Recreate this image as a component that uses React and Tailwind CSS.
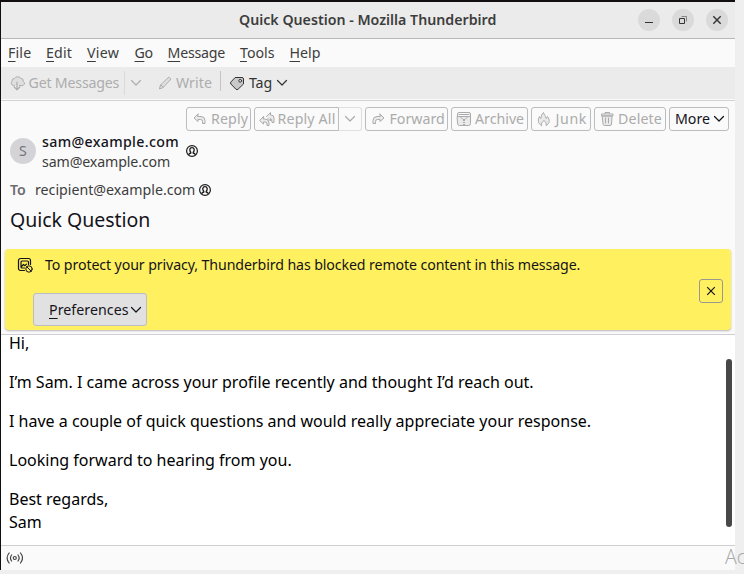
import React from "react";

function Icon({ size = 16, className = "", children }) {
  return (
    <svg width={size} height={size} viewBox="0 0 16 16" fill="none" stroke="currentColor" strokeWidth="1" strokeLinecap="round" strokeLinejoin="round" className={`shrink-0 ${className}`}>
      {children}
    </svg>
  );
}

function Chevron({ className = "" }) {
  return (
    <svg width="12" height="8" viewBox="0 0 12 8" fill="none" stroke="currentColor" strokeWidth="1.2" strokeLinecap="round" strokeLinejoin="round" className={`shrink-0 ${className}`}>
      <path d="M1.5 1.5 6 6l4.5-4.5" />
    </svg>
  );
}

const CloudDown = () => (
  <Icon>
    <path fill="currentColor" fillOpacity=".2" d="M5.500 10.500H4.500A2.500 2.500 0 0 1 3 6.200 2.300 2.300 0 0 1 5.300 3.600 4 4 0 0 1 11.800 3.300 2.800 2.800 0 0 1 14.300 6.500 2.200 2.200 0 0 1 12.500 10.500H10.500" />
    <path strokeWidth="1.200" d="M8 7v7.500M5 11.800l3 2.900 3-2.900" />
  </Icon>
);
const Pencil = () => (
  <Icon>
    <path fill="currentColor" fillOpacity=".2" d="M2.500 13.500l1-3.500L11 2.800a1.200 1.200 0 0 1 1.700 0l.500.500a1.200 1.200 0 0 1 0 1.700L6 12.500z" />
    <path d="M3.800 9.800l2.400 2.400" />
  </Icon>
);
const TagIcon = () => (
  <Icon>
    <path fill="currentColor" fillOpacity=".18" d="M6.500 2.500H13a1.500 1.500 0 0 1 1.500 1.500v5L9.300 14a1.800 1.800 0 0 1-2.600 0L1.900 9a1.500 1.500 0 0 1 0-2z" />
    <circle cx="11.200" cy="5.800" r="1.400" fill="#ebebeb" />
  </Icon>
);
const replyPath = "M6 3 2 7l4 3.500V8.500h2.500q2 0 2 2v2h2.500V9.500q0-4-4-4H6z";
const ReplyIcon = () => (
  <Icon><path fill="currentColor" fillOpacity=".2" d={replyPath} /></Icon>
);
const ForwardIcon = () => (
  <Icon><path fill="currentColor" fillOpacity=".2" d={replyPath} transform="translate(16 0) scale(-1 1)" /></Icon>
);
const ReplyAllIcon = () => (
  <Icon>
    <path fill="currentColor" fillOpacity=".2" d="M4.500 5.500 .600 9.500l3.900 3.500v-2H6q2 0 2 2v1.500h2V12q0-4-4-4H4.500z" />
    <path fill="currentColor" fillOpacity=".2" d="M7.500 5.500 11.500 1.500V4h.500q3 0 3 3v4.500h-2q0-3.500-1.500-4v2.500L9 7.500" />
  </Icon>
);
const ArchiveIcon = () => (
  <Icon>
    <path fill="currentColor" fillOpacity=".2" d="M1.500 5.500h13v7a2 2 0 0 1-2 2h-9a2 2 0 0 1-2-2z" />
    <path d="M1.500 5.500V3a1.500 1.500 0 0 1 1.500-1.500h10A1.500 1.500 0 0 1 14.500 3v2.500M3 3.500h10M4 5.500l3 3h2l3-3" />
    <path d="M8 9v5" strokeDasharray="1 1" strokeLinecap="butt" strokeWidth="2" />
  </Icon>
);
const JunkIcon = () => (
  <Icon>
    <path fill="currentColor" fillOpacity=".2" d="M5.500 14.500C1.500 12.500 1.800 8.500 3.500 5.500c.500 1 .800 1.500 1.500 2C5.300 5 5.500 3 7.500 1.500c0 2 2.500 3 2.500 6 .800-.500 1-1 1.500-2 2.500 3.500 2.500 7-1.500 9 .500-2 0-3.500-2-5-2 1.500-3 3-2.500 5z" />
  </Icon>
);
const TrashIcon = () => (
  <Icon>
    <path fill="currentColor" fillOpacity=".2" d="M3.500 5h9.500l-.500 8a1.500 1.500 0 0 1-1.500 1.500H5.500A1.500 1.500 0 0 1 4 13z" />
    <path d="M2.500 4.500v-1.500h11.500v1.500zM6 2.500v-1h4.500v1M6.500 7v5M9.500 7v5" />
  </Icon>
);
const PersonIcon = () => (
  <svg width="12" height="12" viewBox="0 0 12 12" fill="none" stroke="#1a1a1a" className="shrink-0">
    <circle cx="6" cy="6" r="5.400" strokeWidth="1.200" />
    <path strokeWidth="1.300" d="M2.600 9.800Q3 8.300 4.800 8V7.200Q3.600 6.200 3.800 4.500 4.200 2.700 6 2.700t2.200 1.800Q8.400 6.200 7.200 7.200V8Q9 8.300 9.400 9.800" />
  </svg>
);
const BlockedIcon = () => (
  <Icon>
    <path strokeWidth="1.200" d="M7.500 13.500H3.500a2 2 0 0 1-2-2v-8a2 2 0 0 1 2-2h8a2 2 0 0 1 2 2v4" />
    <path strokeWidth="1.200" d="M7.500 11H5a1 1 0 0 1-1-1V5a1 1 0 0 1 1-1h5.500a1 1 0 0 1 1 1v2.500M4.500 9.500l2-2 1.500 1.200 1.500-1.500" />
    <circle cx="12" cy="12" r="3.200" />
    <path d="M9.800 9.800l4.400 4.400" />
  </Icon>
);
const SignalIcon = () => (
  <svg width="17" height="14" viewBox="0 0 17 14" fill="none" stroke="#444" strokeWidth="1.200" strokeLinecap="round" className="shrink-0">
    <circle cx="8.800" cy="7" r="1.500" />
    <path d="M5.600 4q-2.300 3 0 6M12 4q2.300 3 0 6M3.100 2q-4 5 0 10M14.500 2q4 5 0 10" />
  </svg>
);

const menus = [
  ["F", "ile", "w-[38px] tracking-[0.15px]"],
  ["E", "dit", "w-[41px] tracking-[0.15px]"],
  ["V", "iew", "w-[47.5px] tracking-[0.31px]"],
  ["G", "o", "w-[33px] tracking-[-0.46px]"],
  ["M", "essage", "w-[72.5px] tracking-[-0.24px]"],
  ["T", "ools", "w-[49.5px]"],
  ["H", "elp", "w-[31px]"],
];

function HotLabel({ hot, rest }) {
  return (
    <>
      <span className="underline decoration-1 underline-offset-[3px]">{hot}</span>
      {rest}
    </>
  );
}

function HeaderButton({ icon, children, className = "" }) {
  return (
    <div className={`flex h-6 shrink-0 items-center rounded-[3px] border border-[#bcbcbe] text-[#ababab] ${className}`}>
      {icon}
      {children}
    </div>
  );
}

function WindowButton({ children }) {
  return <div className="flex size-[22px] items-center justify-center rounded-full bg-[#dadada] text-[#333]">{children}</div>;
}

export default function App() {
  return (
    <div className="relative h-[574px] w-[744px] overflow-hidden bg-[#efefef] font-['Noto_Sans',sans-serif] text-[14.2px] leading-5 whitespace-nowrap text-[#3d3d3d]">
      <div className="flex h-[570px] w-[735px] flex-col border-t-2 border-l border-[#120f10] bg-[#fafafa]">
        <header className="flex h-[37px] shrink-0 items-center border-b border-[#b8b8b8] bg-[#ebebeb] pr-[7px]">
          <div className="ml-[238px] flex-1 font-semibold">Quick Question - Mozilla Thunderbird</div>
          <div className="flex gap-3">
            <WindowButton>
              <svg width="10" height="10" stroke="currentColor"><path d="M1 7.500h8" /></svg>
            </WindowButton>
            <WindowButton>
              <svg width="10" height="10" fill="none" stroke="currentColor"><path d="M1.500 3.500h5v5h-5z" /><path d="M3.500 1.500h5v5" strokeOpacity=".5" /></svg>
            </WindowButton>
            <WindowButton>
              <svg width="10" height="10" stroke="currentColor" strokeWidth="1.400"><path d="M1.300 1.300l7.400 7.400M8.700 1.300 1.300 8.700" /></svg>
            </WindowButton>
          </div>
        </header>

        <nav className="flex h-7 shrink-0 items-center pl-[7px]">
          {menus.map(([hot, rest, cls]) => (
            <div key={hot} className={cls}><HotLabel hot={hot} rest={rest} /></div>
          ))}
        </nav>

        <div className="flex h-8 shrink-0 items-center bg-[#ebebeb] pl-2 text-[#adadad]">
          <CloudDown />
          <span className="ml-[3.5px] w-[95.5px] tracking-[-0.2px]">Get Messages</span>
          <div className="h-6 w-px bg-[#dadada]" />
          <Chevron className="ml-[5px]" />
          <span className="ml-[15px]"><Pencil /></span>
          <span className="ml-[3px] w-[44px] tracking-[0.06px]">Write</span>
          <div className="mb-1 h-5 w-px bg-[#c4c4c4]" />
          <div className="ml-2 flex items-center text-[#333]">
            <TagIcon />
            <span className="ml-[4px] w-[27px] tracking-[-0.14px]">Tag</span>
            <Chevron />
          </div>
        </div>

        <section className="mt-px h-[146px] shrink-0 border-t border-[#d2d2d6]">
          <div className="mt-1.5 mr-1.5 flex justify-end gap-[3px]">
            <HeaderButton icon={<ReplyIcon />} className="w-[65px] pl-[5px]"><span className="ml-[3px] tracking-[0.11px]">Reply</span></HeaderButton>
            <div className="flex w-[108px]">
              <HeaderButton icon={<ReplyAllIcon />} className="w-[85px] rounded-r-none pl-[3.500px]"><span className="ml-[3px] tracking-[0.16px]">Reply All</span></HeaderButton>
              <div className="flex h-6 w-[23px] items-center justify-center rounded-r-[3px] border border-l-0 border-[#dfdfdf] text-[#ababab]"><Chevron /></div>
            </div>
            <HeaderButton icon={<ForwardIcon />} className="w-[83px] pl-1"><span className="ml-[3.500px]">Forward</span></HeaderButton>
            <HeaderButton icon={<ArchiveIcon />} className="w-[77px] pl-1"><span className="ml-[3px]">Archive</span></HeaderButton>
            <HeaderButton icon={<JunkIcon />} className="w-[60px] pl-1"><span className="ml-[3.500px] tracking-[0.62px]">Junk</span></HeaderButton>
            <HeaderButton icon={<TrashIcon />} className="w-[72px] pl-1"><span className="ml-[3px] tracking-[0.14px]">Delete</span></HeaderButton>
            <HeaderButton className="w-[60px] pl-[5px]"><span className="mr-[3px] text-[#15141a]">More</span><Chevron className="text-[#15141a]" /></HeaderButton>
          </div>

          <div className="flex h-[40px] items-center pl-[9px]">
            <div className="flex size-[26px] items-center justify-center rounded-full bg-[#d4d4d8] text-[#75757a]">S</div>
            <div className="ml-[6px] w-[144px] pt-0.5">
              <div className="font-medium tracking-[0.33px] text-[#15141a]">sam@example.com</div>
              <div className="tracking-[-0.13px]">sam@example.com</div>
            </div>
            <PersonIcon />
          </div>

          <div className="mt-[9px] flex items-center pl-[9px]">
            <span className="w-[25px] font-semibold text-[#6b6b70]">To</span>
            <span className="w-[164px]">recipient@example.com</span>
            <PersonIcon />
          </div>

          <h1 className="mt-[6px] pl-[9px] text-[19.500px] leading-7 tracking-[-0.03px] text-[#15141a]">Quick Question</h1>
        </section>

        <div className="mt-[3px] mr-1 ml-1 flex h-[81px] shrink-0 rounded-[4px] bg-[#fff060] text-[#15141a] shadow-[0_1px_2px_rgba(58,57,68,0.35)]">
          <div className="flex-1">
            <div className="flex h-[31px] items-center pl-3">
              <BlockedIcon />
              <span className="ml-3 tracking-[-0.11px]">To protect your privacy, Thunderbird has blocked remote content in this message.</span>
            </div>
            <div className="mt-[13px] ml-7 flex h-[33px] w-[114px] items-center rounded-[3px] border border-[#bcbcc4] bg-[#e1e1e2] pl-[15px]">
              <span className="w-[81px] tracking-[0.05px]"><HotLabel hot="P" rest="references" /></span>
              <Chevron />
            </div>
          </div>
          <div className="mt-[30px] mr-2 flex size-6 items-center justify-center rounded-[3px] border border-[#9a9690]">
            <svg width="10" height="10" stroke="currentColor" strokeWidth="1.200"><path d="M1.200 1.200l7.600 7.600M8.800 1.200 1.200 8.800" /></svg>
          </div>
        </div>

        <main className="mt-1 flex h-[211px] shrink-0 overflow-hidden border-t border-[#cfcfd3] bg-white">
          <article className="-mt-[3px] flex-1 space-y-4 pl-2 text-[16px] leading-[23px] text-black">
            <p>Hi,</p>
            <p>I’m Sam. I came across your profile recently and thought I’d reach out.</p>
            <p>I have a couple of quick questions and would really appreciate your response.</p>
            <p>Looking forward to hearing from you.</p>
            <p>Best regards,<br />Sam</p>
          </article>
          <div className="mt-6 mr-[3px] h-[168px] w-1.5 rounded-full bg-[#484848]" />
        </main>

        <footer className="flex flex-1 items-center border-t border-[#cfcfd3] pl-[5px]">
          <SignalIcon />
        </footer>
      </div>
      <div className="absolute top-[543px] left-[725px] font-['Open_Sans',sans-serif] text-[19.500px] leading-[28px] font-light text-[#a8a8a8]">Ac</div>
      <div className="absolute top-[568px] left-[726px] font-['Open_Sans',sans-serif] text-[15px] leading-[20px] text-[#bdbdbd]">G</div>
    </div>
  );
}
